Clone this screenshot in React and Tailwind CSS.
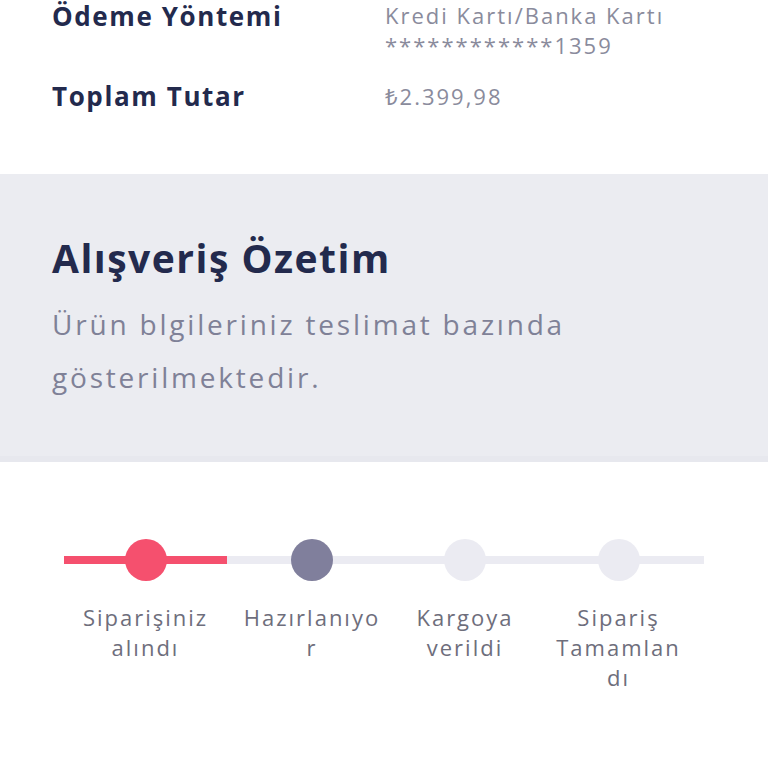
import React from 'react';

const steps = [
  { lines: ['Siparişiniz', 'alındı'], dot: 'bg-[#f5506e]' },
  { lines: ['Hazırlanıyo', 'r'], dot: 'bg-[#807f9c]' },
  { lines: ['Kargoya', 'verildi'], dot: 'bg-[#ebebf2]' },
  { lines: ['Sipariş', 'Tamamlan', 'dı'], dot: 'bg-[#ebebf2]' },
];

const font = { fontFamily: '"Open Sans", "Noto Sans", sans-serif' };

export default function App() {
  return (
    <div className="w-[768px] h-[768px] overflow-hidden bg-white" style={font}>
      {/* Order info */}
      <div className="px-[52px] pt-0 h-[174px]">
        <div className="grid grid-cols-[333px_1fr]">
          <div className="text-[26px] leading-[32px] font-bold tracking-[1.6px] text-[#232a4d]">Ödeme Yöntemi</div>
          <div className="text-[22px] leading-[30px] tracking-[2px] text-[#8a8b9c]">
            <div>Kredi Kartı/Banka Kartı</div>
            <div>************1359</div>
          </div>
        </div>
        <div className="grid grid-cols-[333px_1fr] mt-[20px]">
          <div className="text-[26px] leading-[32px] font-bold tracking-[1.6px] text-[#232a4d]">Toplam Tutar</div>
          <div className="text-[22px] leading-[32px] tracking-[2px] text-[#8a8b9c]">₺2.399,98</div>
        </div>
      </div>

      {/* Summary header */}
      <div className="h-[288px] bg-[#ebecf1] border-b-[6px] border-[#e7e8ee] px-[52px] pt-[58px]">
        <h2 className="text-[39px] leading-[52px] font-bold tracking-[1.5px] text-[#232a4d]">Alışveriş Özetim</h2>
        <p className="w-[620px] mt-[14px] text-[28px] leading-[53px] tracking-[2.8px] text-[#7f8197]">
          Ürün blgileriniz teslimat bazında gösterilmektedir.
        </p>
      </div>

      {/* Stepper */}
      <div className="pt-[77px] px-[64px]">
        <div className="grid grid-cols-[163px_170px_136px_171px]">
          {steps.map((s, i) => (
            <div key={i} className="flex flex-col items-center">
              <div className="relative w-full h-[42px] flex items-center justify-center">
                <div
                  className={
                    'absolute left-0 right-0 top-[17px] h-[8px] ' +
                    (i === 0 ? 'bg-[#f5506e]' : 'bg-[#ebebf2]')
                  }
                />
                <div className={'relative w-[42px] h-[42px] rounded-full ' + s.dot} />
              </div>
              <div className="mt-[21px] text-center text-[22px] leading-[30px] tracking-[2px] text-[#6e6e7c]">
                {s.lines.map((l, j) => (
                  <div key={j}>{l}</div>
                ))}
              </div>
            </div>
          ))}
        </div>
      </div>
    </div>
  );
}
